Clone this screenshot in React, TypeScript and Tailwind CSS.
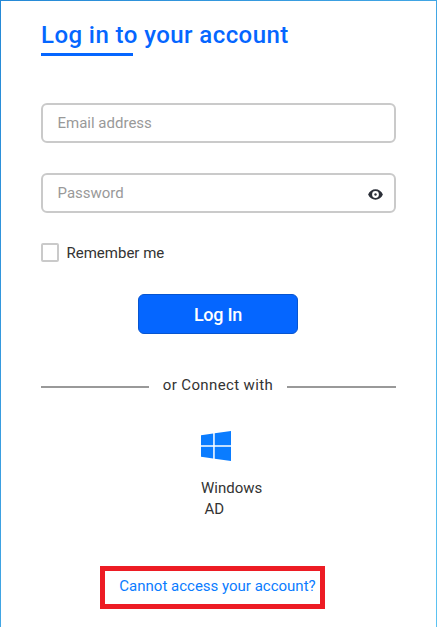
import React from "react";

function EyeIcon() {
  return (
    <svg width="15" height="11" viewBox="0 0 15 11" aria-hidden="true">
      <path
        fillRule="evenodd"
        fill="#2b2f38"
        d="M7.5 0.3C4.3 0.3 1.5 2.3 0.1 5.5c1.4 3.2 4.2 5.2 7.4 5.2s6-2 7.4-5.2C13.5 2.3 10.7 0.3 7.5 0.3ZM7.5 2.1a3.4 3.4 0 1 1 0 6.8a3.4 3.4 0 0 1 0-6.8Z"
      />
      <circle cx="7.5" cy="5.5" r="1.2" fill="#2b2f38" />
    </svg>
  );
}

function WindowsLogo() {
  return (
    <svg width="30" height="30" viewBox="0 0 30 30" fill="#0a7cff" aria-hidden="true">
      <path d="M0 4.2 12.2 2.5V14.3H0ZM13.7 2.3 30 0V14.3H13.7ZM0 15.8H12.2V27.5L0 25.8ZM13.7 15.8H30V30L13.7 27.7Z" />
    </svg>
  );
}

const fieldClass =
  "h-10 w-full rounded-md border-2 border-[#cacaca] bg-white pl-[14.5px] pb-px text-[15px] text-[#333] outline-none placeholder:text-[#999]";

export default function App() {
  return (
    <div className="h-[627px] w-[437px] overflow-hidden bg-linear-to-br from-[#2589d6] to-[#5cc3f2] px-px pt-px font-['Roboto',sans-serif]">
      <main className="flex h-full flex-col bg-white px-10 pt-4 text-[15px] text-[#333]">
        <h1 className="h-9 text-2xl leading-9 font-medium tracking-[0.43px] whitespace-nowrap text-[#0566ff]">
          Log in to your account
        </h1>
        <div className="h-[3px] w-[92px] bg-[#0566ff]" />

        <form className="mt-[47px] flex flex-col" onSubmit={(e) => e.preventDefault()}>
          <input className={fieldClass} type="email" placeholder="Email address" />
          <div className="relative mt-[30px] h-10">
            <input className={fieldClass} type="password" placeholder="Password" />
            <button type="button" aria-label="Show password" className="absolute top-[16px] right-[13px]">
              <EyeIcon />
            </button>
          </div>
          <label className="mt-[30px] flex h-[19px] items-center">
            <input
              type="checkbox"
              className="h-[19px] w-[18px] appearance-none rounded-[2px] border-2 border-[#cacaca] bg-white"
            />
            <span className="ml-[7.5px] pt-[2px] leading-[19px]">Remember me</span>
          </label>
          <button
            type="submit"
            className="mt-8 ml-[97px] h-10 w-40 rounded-md border border-[#0755d0] bg-[#0566ff] pt-px text-lg leading-none font-medium tracking-[-0.25px] text-white"
          >
            Log In
          </button>
        </form>

        <div className="mt-10 flex h-[22px] items-center">
          <div className="mt-[4px] h-[2px] w-[108px] bg-[#999]" />
          <span className="w-[138px] text-center text-[15px] leading-[22px] tracking-[0.37px] whitespace-nowrap">or Connect with</span>
          <div className="mt-[4px] h-[2px] w-[109px] bg-[#999]" />
        </div>

        <div className="mt-[35px] ml-[160px] w-[70px]">
          <WindowsLogo />
          <div className="mt-[17px] leading-[21px]">
            <div>Windows</div>
            <div className="ml-[3.5px]">AD</div>
          </div>
        </div>

        <div className="mt-[46px] ml-[59px] flex h-[43px] w-[225px] justify-center border-[5px] border-[#ed1c24] pl-[10px] pt-[4px]">
          <a href="#" className="leading-[22px] whitespace-nowrap text-[#0a7cff]">
            Cannot access your account?
          </a>
        </div>
      </main>
    </div>
  );
}
